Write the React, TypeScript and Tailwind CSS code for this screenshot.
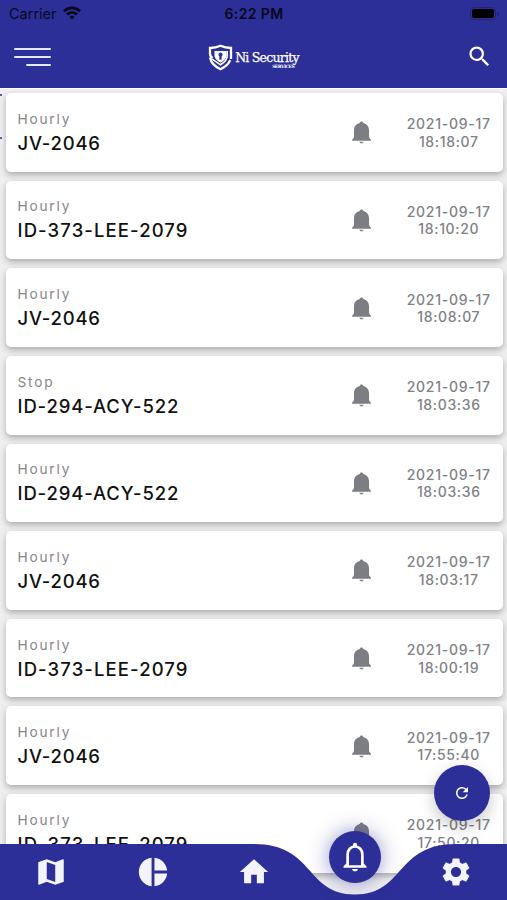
import type { ReactNode } from "react";
import {
  MdHome,
  MdMap,
  MdPieChart,
  MdRefresh,
  MdSearch,
  MdSettings,
} from "react-icons/md";

type Alert = { kind: string; unit: string; tracking: string; date: string; time: string };

const JV = { unit: "JV-2046", tracking: "tracking-[0.75px]" };
const LEE = { unit: "ID-373-LEE-2079", tracking: "tracking-[1.1px]" };
const ACY = { unit: "ID-294-ACY-522", tracking: "tracking-[0.85px]" };

const alerts: Alert[] = [
  { kind: "Hourly", ...JV, date: "2021-09-17", time: "18:18:07" },
  { kind: "Hourly", ...LEE, date: "2021-09-17", time: "18:10:20" },
  { kind: "Hourly", ...JV, date: "2021-09-17", time: "18:08:07" },
  { kind: "Stop", ...ACY, date: "2021-09-17", time: "18:03:36" },
  { kind: "Hourly", ...ACY, date: "2021-09-17", time: "18:03:36" },
  { kind: "Hourly", ...JV, date: "2021-09-17", time: "18:03:17" },
  { kind: "Hourly", ...LEE, date: "2021-09-17", time: "18:00:19" },
  { kind: "Hourly", ...JV, date: "2021-09-17", time: "17:55:40" },
  { kind: "Hourly", ...LEE, date: "2021-09-17", time: "17:50:20" },
];

function StatusBar() {
  return (
    <div className="grid h-[27px] grid-cols-3 items-center pl-[9px] pr-2 text-[#08081c]">
      <div className="flex items-center gap-[6px] pt-px">
        <span className="text-[14.5px] leading-none">Carrier</span>
        <svg className="-mt-[2px]" width="18" height="14" viewBox="0 0 18 14" fill="none" stroke="currentColor" strokeWidth="2.8">
          <path d="M1 5.2C5.6 .8 12.4 .8 17 5.2" />
          <path d="M4 8.6c2.9-2.7 7.1-2.7 10 0" />
          <path d="M9 13.6L6.3 10.8c1.6-1.4 3.8-1.4 5.4 0z" fill="currentColor" stroke="none" />
        </svg>
      </div>
      <span className="text-center text-[14px] font-semibold leading-none tracking-[0.4px]">6:22 PM</span>
      <div className="flex items-center justify-end gap-px">
        <div className="rounded-[4px] border border-[#23246f] p-px">
          <div className="h-[9px] w-[22px] rounded-[2.5px] bg-black" />
        </div>
        <div className="h-1 w-[1.5px] rounded-r bg-[#23246f]" />
      </div>
    </div>
  );
}

function Logo() {
  return (
    <div className="flex items-center gap-[2px] text-white">
      <svg width="25" height="27" viewBox="0 0 25 27" fill="none" stroke="currentColor">
        <path d="M23 15V4C18.500 4 15.500 3.200 12.500 1.800 9.500 3.200 6.500 4 2 4v5.500c0 2.200.8 3.400 2.600 4.400" strokeWidth="2.300" />
        <path d="M2 13.500c1 5.300 4.700 9 10.500 11.700 4.800-2.300 8.200-5 9.700-9" strokeWidth="2.300" />
        <path d="M4.200 15.200l8.300 5.600c4.400-2.600 6.700-5 6.700-9V7" strokeWidth="1.600" />
        <path d="M6.500 7h12v4.500c0 3-2.700 5.200-6 7.300-3.300-2.100-6-4.300-6-7.300z" fill="currentColor" stroke="none" />
        <path d="M12.500 8.500a2.100 2.100 0 0 1 1.100 3.900v3.400h-2.200v-3.400a2.100 2.100 0 0 1 1.100-3.900z" fill="#2d2f98" stroke="none" />
      </svg>
      <div className="flex flex-col pt-[5px] font-['DejaVu_Serif',serif]">
        <span className="whitespace-nowrap text-[12.5px] leading-[15px] tracking-[-0.75px] [-webkit-text-stroke:0.25px_white]">Ni Security</span>
        <span className="-mt-px ml-[37px] text-[4.5px] font-bold leading-[5px] tracking-[-0.5px]">SERVICES</span>
      </div>
    </div>
  );
}

function Header() {
  return (
    <header className="relative z-10 h-[88px] bg-[#2d2f98]">
      <StatusBar />
      <div className="grid h-[60px] grid-cols-[60px_1fr_60px] items-center">
        <div className="ml-[14px] flex w-[37px] flex-col items-end gap-[6px]">
          <div className="h-[2px] w-full rounded-full bg-[#e6e7ff]" />
          <div className="h-[2px] w-full rounded-full bg-[#e6e7ff]" />
          <div className="h-[2px] w-[25px] rounded-full bg-[#e6e7ff]" />
        </div>
        <div className="flex justify-center">
          <Logo />
        </div>
        <MdSearch className="-mt-px ml-[19px] text-white" size={27} />
      </div>
    </header>
  );
}

function BellIcon() {
  return (
    <svg className="mr-[31px] mt-px text-[#7d7e83]" width="27" height="27" viewBox="0 0 24 24" fill="currentColor">
      <path d="M12 2.200c-.9 0-1.500.6-1.600 1.400C7.200 4.300 5.300 6.800 5.300 10v6c0 .9-1.300 1.900-1.700 2.400v1h16.800v-1c-.4-.5-1.700-1.500-1.700-2.400v-6c0-3.200-1.900-5.700-5.100-6.400-.1-.8-.7-1.400-1.600-1.400z" />
      <path d="M10.200 20.300h3.600c0 .8-.8 1.400-1.800 1.400s-1.800-.6-1.800-1.400z" />
    </svg>
  );
}

function BellOutlineIcon() {
  return (
    <svg width="34" height="34" viewBox="0 0 24 24" fill="none" stroke="currentColor">
      <path d="M6.800 18.200V10.300C6.800 6.900 9 4.600 12 4.600s5.200 2.300 5.200 5.700v7.900" strokeWidth="1.900" />
      <path d="M3.900 19.600v-1.100l2-2h1.800v1.300h8.600v-1.300h1.800l2 2v1.100z" fill="currentColor" stroke="none" />
      <path d="M10.500 4.500V3.500a1.500 1.500 0 0 1 3 0v1z" fill="currentColor" stroke="none" />
      <path d="M10 20.400h4c0 1-.9 1.700-2 1.700s-2-.7-2-1.700z" fill="currentColor" stroke="none" />
    </svg>
  );
}

function AlertCard({ alert }: { alert: Alert }) {
  return (
    <article className="flex h-[78.700px] shrink-0 items-center rounded-[5px] bg-white pl-[11.500px] shadow-[0_3px_6px_rgba(0,0,0,0.28)]">
      <div className="flex flex-1 flex-col pt-px">
        <span className="text-[13.700px] leading-[20px] tracking-[1.8px] text-[#85868a]">{alert.kind}</span>
        <span className={`text-[18.500px] font-medium leading-[28px] text-[#111] ${alert.tracking}`}>{alert.unit}</span>
      </div>
      <BellIcon />
      <div className="mr-[8.500px] flex w-[88.500px] flex-col items-center whitespace-nowrap pt-px text-[14px] font-medium leading-[17.500px] text-[#808186]">
        <span className="-ml-[2px] tracking-[0.75px]">{alert.date}</span>
        <span className="-ml-[2px] tracking-[0.65px]">{alert.time}</span>
      </div>
    </article>
  );
}

function Tab({ children }: { children?: ReactNode }) {
  return <div className="flex h-[56px] flex-1 items-center justify-center">{children}</div>;
}

function TabBar() {
  return (
    <nav className="absolute inset-x-0 bottom-0 h-[56px] text-[#f3f4fb]">
      <svg className="absolute inset-0" width="507" height="56" viewBox="0 0 507 56">
        <path d="M0 0H254C315 0 305 50.500 355 50.500S395 0 456 0H507V56H0Z" fill="#2d2f98" />
      </svg>
      <div className="relative flex">
        <Tab><MdMap className="ml-px" size={34} /></Tab>
        <Tab><MdPieChart className="ml-[2px]" size={34} /></Tab>
        <Tab><MdHome size={34} /></Tab>
        <Tab>
          <div className="mb-[30px] flex size-[52px] items-center justify-center rounded-full bg-[#2d2f98] text-white shadow-[0_0_20px_rgba(45,47,152,0.5)]">
            <BellOutlineIcon />
          </div>
        </Tab>
        <Tab><MdSettings size={34} /></Tab>
      </div>
    </nav>
  );
}

export default function App() {
  return (
    <div className="relative flex h-[900px] w-[507px] flex-col overflow-hidden bg-[#efeff0] font-[Inter,sans-serif]">
      <Header />
      <main className="flex min-h-0 flex-1 flex-col gap-[8.950px] overflow-hidden border-t border-white pl-[6px] pr-[4.500px] pt-[4px]">
        {alerts.map((alert) => (
          <AlertCard key={alert.time + alert.unit} alert={alert} />
        ))}
      </main>
      <div className="absolute left-0 top-[94px] h-[2px] w-[2px] bg-[#5557b5]" />
      <div className="absolute left-0 top-[137px] h-[2px] w-[2px] bg-[#5557b5]" />
      <TabBar />
      <button className="absolute left-[434px] top-[765px] flex size-[56px] items-center justify-center rounded-full bg-[#2d2f98] text-white shadow-[0_6px_16px_rgba(0,0,0,0.22)]">
        <MdRefresh size={18} />
      </button>
    </div>
  );
}
